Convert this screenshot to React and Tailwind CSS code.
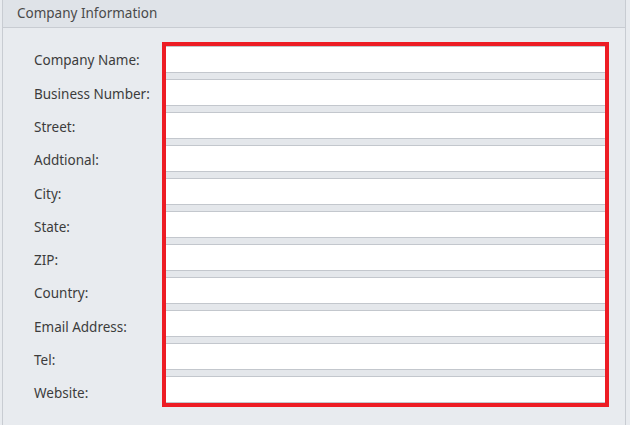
export default function App() {
  const labels = [
    "Company Name:",
    "Business Number:",
    "Street:",
    "Addtional:",
    "City:",
    "State:",
    "ZIP:",
    "Country:",
    "Email Address:",
    "Tel:",
    "Website:",
  ];
  return (
    <div
      className="w-[630px] h-[425px] bg-[#e8ebef] overflow-hidden"
      style={{ fontFamily: '"Noto Sans", "Open Sans", sans-serif' }}
    >
      <div className="ml-[2px] w-[624px] h-full border-l border-r border-[#c8ccd2] flex flex-col">
        <div className="h-[28px] shrink-0 bg-[#dfe3e8] border-b border-[#c8ccd2] flex items-center pl-[14px] text-[13.5px] text-[#4a4a4a]">
          Company Information
        </div>
        <div className="flex pt-[14px]">
          <div className="w-[159px] shrink-0 pt-[5px] pl-[31px] flex flex-col gap-[6.3px]">
            {labels.map((l) => (
              <div key={l} className="h-[27px] flex items-center text-[13.5px] text-[#3c3c3c] whitespace-nowrap">
                {l}
              </div>
            ))}
          </div>
          <div className="w-[447px] border-4 border-[#ed1c24] flex flex-col gap-[6px] bg-[#e4e7eb]">
            {labels.map((l) => (
              <div key={l} className="h-[27px] bg-white border-y border-[#c3c7cd]" />
            ))}
          </div>
        </div>
      </div>
    </div>
  );
}
